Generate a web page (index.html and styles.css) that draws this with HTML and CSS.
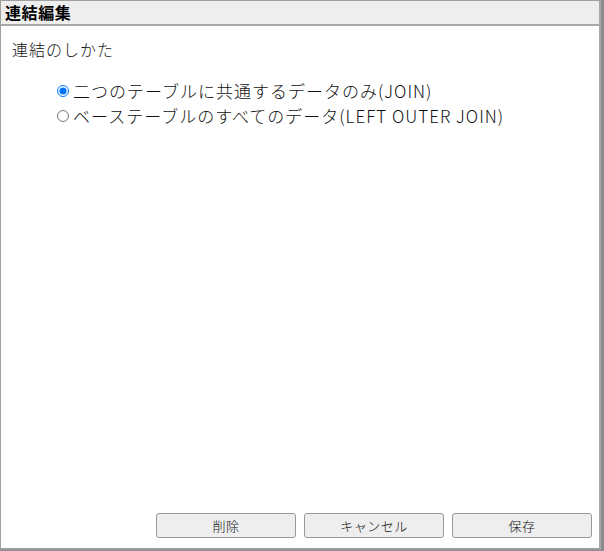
FILE: index.html
```html
<!DOCTYPE html>
<html lang="ja">
<head>
    <meta charset="UTF-8">
    <title>連結編集</title>
    <link rel="stylesheet" href="styles.css">
</head>
<body>
    <div class="dialog">
        <!-- title -->
        <div class="titleBar">連結編集</div>

        <!-- body -->
        <div class="content">
            <div class="label">連結のしかた</div>
            <div class="options">
                <label class="option"><input type="radio" name="join" checked>二つのテーブルに共通するデータのみ(JOIN)</label>
                <label class="option"><input type="radio" name="join">ベーステーブルのすべてのデータ(LEFT OUTER JOIN)</label>
            </div>
        </div>

        <!-- buttons -->
        <div class="footer">
            <button>削除</button>
            <button>キャンセル</button>
            <button>保存</button>
        </div>
    </div>
</body>
</html>
```

FILE: styles.css
```css
body{
    margin: 0;
    background-color: #8c8c8c;
    font-family: "Noto Sans CJK JP", "Noto Sans", sans-serif;
    color: #111;
}

.dialog{
    width: 601px;
    height: 550px;
    box-sizing: border-box;
    border: 1px solid #a0a0a0;
    border-right: 2px solid #a8a8a8;
    border-bottom: 2px solid #9a9a9a;
    background-color: #fff;
    display: flex;
    flex-direction: column;
}

.titleBar{
    height: 23px;
    line-height: 23px;
    padding-left: 4px;
    background-color: #eeeeee;
    border-bottom: 2px solid #a8a8a8;
    font-size: 16px;
    font-weight: bold;
    letter-spacing: 0.6px;
    color: #000;
}

.content{
    flex: 1;
    padding: 11px 11px;
}

.label{
    font-size: 16px;
    letter-spacing: 1px;
    line-height: 24px;
    font-weight: 300;
}

.options{
    margin-top: 17px;
    padding-left: 41px;
    display: flex;
    flex-direction: column;
}

.option{
    font-size: 17px;
    letter-spacing: 1px;
    line-height: 25px;
    font-weight: 300;
    display: flex;
    align-items: center;
}

.option input{
    width: 12px;
    height: 12px;
    margin: 0 4px 0 4px;
}

.footer{
    display: flex;
    justify-content: flex-end;
    gap: 8px;
    padding: 0 7px 10px 0;
}

.footer button{
    width: 140px;
    height: 25px;
    background-color: #eeeeee;
    border: 1px solid #9a9a9a;
    border-radius: 3px;
    font-family: "Noto Sans CJK JP", sans-serif;
    font-size: 13px;
    letter-spacing: 0.5px;
    font-weight: 300;
    color: #111;
    padding: 0;
}
```
